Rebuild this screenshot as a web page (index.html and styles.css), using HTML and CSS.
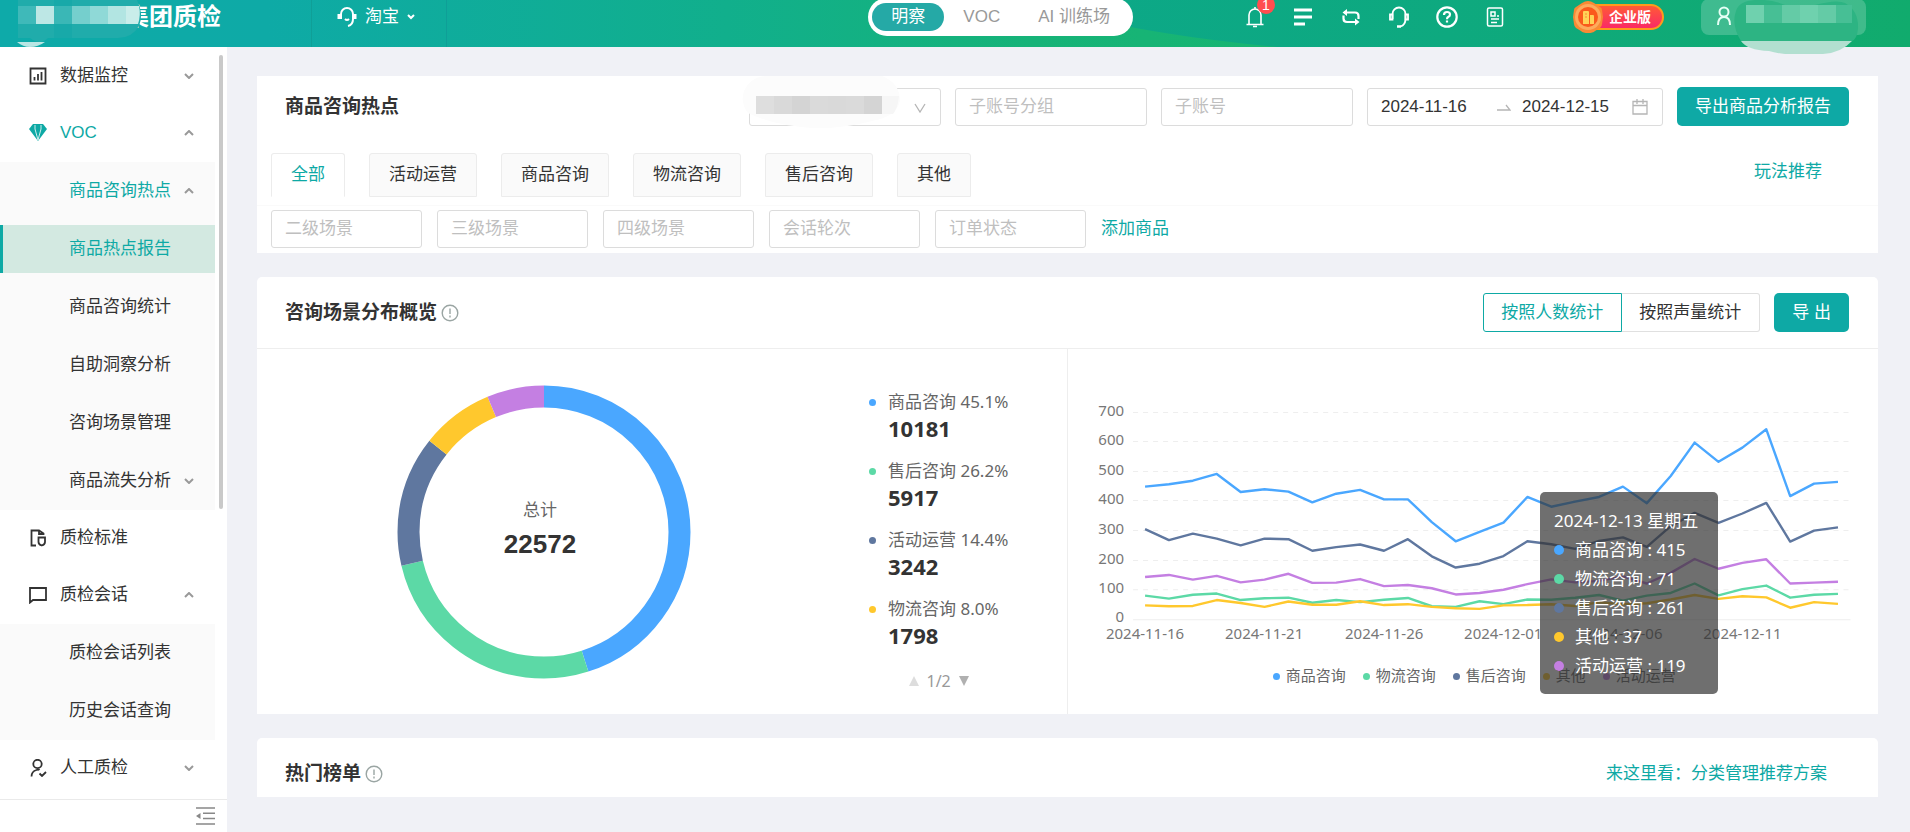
FILE: index.html
```html
<!DOCTYPE html>
<html lang="zh-CN">
<head>
<meta charset="utf-8">
<title>商品咨询热点</title>
<meta name="viewport" content="width=device-width, initial-scale=1">
<link rel="stylesheet" href="styles.css">
</head>
<body>
<div class="app">
  <header class="topbar">
    <svg class="topbar-wave" viewBox="0 0 850 47" preserveAspectRatio="none" aria-hidden="true">
      <defs>
        <linearGradient id="wave" x1="0" x2="1" y1="0" y2="0">
          <stop offset="0" stop-color="#0ca888"/>
          <stop offset="0.45" stop-color="#0ea97f"/>
          <stop offset="1" stop-color="#11ab6d"/>
        </linearGradient>
      </defs>
      <path d="M0 14Q90 36 210 47H850V0H0Z" fill="url(#wave)"/>
    </svg>

    <div class="brand">
      <span class="brand-name">集团质检</span>
      <svg class="brand-mask" viewBox="0 0 146 47" aria-hidden="true">
        <path d="M18 0H137Q144 14 139 26Q132 38 118 38H48Q40 46 30 38H18Z" fill="#20acab"/>
        <path d="M54 0H72V38H54Z" fill="#18a9a9"/>
        <path d="M18 6H36V24H18Z" fill="#3fb9b9"/>
        <path d="M36 6H54V24H36Z" fill="#bde7e5"/>
        <path d="M54 6H72V24H54Z" fill="#3ab7b6"/>
        <path d="M72 6H90V24H72Z" fill="#75cfcd"/>
        <path d="M90 6H108V24H90Z" fill="#8fd9d7"/>
        <path d="M108 6H126V24H108Z" fill="#b2e5e2"/>
        <path d="M126 6H139Q141 15 138 24H126Z" fill="#c9edea"/>
        <path d="M17 42H45Q38 47 30 47Q23 47 17 42Z" fill="#b9e6e4"/>
      </svg>
    </div>

    <button class="channel" type="button">
      <svg width="20" height="22" viewBox="0 0 20 22" fill="none" stroke="#fff" stroke-width="2" aria-hidden="true">
        <path d="M4 13V8a6 6 0 0 1 12 0v5q0 6-5 7"/><path d="M2 8v5M18 8v5" stroke-width="3"/><path d="M8 13q2 2 4 0"/>
      </svg>
      <span>淘宝</span>
      <svg width="8" height="6" viewBox="0 0 8 6" fill="none" stroke="#fff" stroke-width="2" aria-hidden="true"><path d="M1 1l3 3 3-3"/></svg>
    </button>

    <nav class="mode">
      <a class="mode-item mode-on" href="#">明察</a>
      <a class="mode-item" href="#">VOC</a>
      <a class="mode-item" href="#">AI 训练场</a>
    </nav>

    <div class="tools">
      <button class="tool" type="button" aria-label="通知">
        <svg width="22" height="22" viewBox="0 0 22 22" fill="none" stroke="#fff" stroke-width="1.6"><path d="M5 18V9a6 6 0 0 1 12 0v9M2.500 18.500h17M9 20.500h4M11 3V1"/></svg>
        <span class="badge">1</span>
      </button>
      <button class="tool" type="button" aria-label="列表">
        <svg width="22" height="22" viewBox="0 0 22 22" fill="none" stroke="#fff" stroke-width="3.200"><path d="M2 4h18M2 11h18M2 18h11"/></svg>
      </button>
      <button class="tool" type="button" aria-label="切换">
        <svg width="22" height="22" viewBox="0 0 22 22" fill="none" stroke="#fff" stroke-width="2.200"><path d="M4 6.500h11q3.500 0 3.500 3.500v3M18 16H7q-3.500 0-3.500-3.500v-3"/><path d="M7 3L2.500 6.500 7 10ZM15 12.500l4.500 3.500-4.500 3.500Z" fill="#fff" stroke="none"/></svg>
      </button>
      <button class="tool" type="button" aria-label="客服">
        <svg width="22" height="22" viewBox="0 0 22 22" fill="none" stroke="#fff" stroke-width="1.800"><path d="M4.500 13V8a6.500 6.500 0 0 1 13 0v5q0 6-5 7.500"/><path d="M2 8.500h2.500v5H2zM17.500 8.500H20v5h-2.500z"/><path d="M9 20.500h4" stroke-width="2.500"/></svg>
      </button>
      <button class="tool" type="button" aria-label="帮助">
        <svg width="22" height="22" viewBox="0 0 22 22" fill="none" stroke="#fff" stroke-width="2.200"><circle cx="11" cy="11" r="9.700"/><path d="M8 9q0-3 3-3t3 2.500q0 1.500-1.500 2.200T11 13.200"/><path d="M11 14.500v2"/></svg>
      </button>
      <button class="tool" type="button" aria-label="文档">
        <svg width="22" height="22" viewBox="0 0 22 22" fill="none" stroke="#fff" stroke-width="1.500"><rect x="3.500" y="2" width="15" height="18" rx="1.500"/><path d="M7 6h4v4H7zM13 10h2M7 13h8M7 16.500h6"/></svg>
      </button>
    </div>

    <div class="edition">
      <svg class="edition-mark" width="32" height="34" viewBox="0 0 32 34" aria-hidden="true">
        <path d="M16 1q3 0 6 2l6 4q2 1 2 3l1 7-1 7q0 2-2 4l-5 3q-2 2-7 2t-7-2l-5-3q-2-2-2-4l-1-7 1-7q0-2 2-3l6-4q3-2 6-2z" fill="#f98a35"/>
        <circle cx="16" cy="17" r="13" fill="#fdab5c"/><circle cx="16" cy="17" r="10" fill="#fa5a1c"/>
        <path d="M11 12q0-1 1-1h4q1 0 1 1v12h-6zM18 15h3q1 0 1 1v8h-4z" fill="#ffd257"/>
        <path d="M13 14h2M13 17h2" stroke="#f98a35"/>
      </svg>
      <span class="edition-text">企业版</span>
    </div>

    <div class="user">
      <svg width="18" height="20" viewBox="0 0 18 20" fill="none" stroke="#e6fff5" stroke-width="2" aria-hidden="true"><circle cx="9" cy="6" r="4.500"/><path d="M3 19q0-8 6-8t6 8"/></svg>
      <svg class="user-mask" viewBox="0 0 126 56" aria-hidden="true">
        <path d="M3 12Q6 2 22 1Q38 0 52 6H82Q104 0 112 4Q126 12 125 30Q124 40 119 42H8Q-2 26 3 12Z" fill="#2db483"/>
        <path d="M8 42H119Q108 54 90 55H52Q42 54 36 52Q14 51 8 42Z" fill="#b2dfd0"/>
        <path d="M13 6h18v18H13zM67 6h18v18H67z" fill="#6fd1ae"/>
        <path d="M31 6h18v18H31zM103 6h16v18h-16z" fill="#47bf95"/>
        <path d="M49 6h18v18H49zM85 6h18v18H85z" fill="#64cba6"/>
      </svg>
    </div>
  </header>

  <aside class="sidebar">
    <nav class="menu">
      <a class="item" href="#">
        <svg class="ico" viewBox="0 0 18 18" fill="none" stroke="#333" stroke-width="1.800"><path d="M1.500 1.500h15v15h-15zM5.500 10v3.500M9 7v6.500M12.500 5v8.500"/></svg>
        <span class="label">数据监控</span><svg class="arrow" viewBox="0 0 10 6"><path d="M1 1l4 4 4-4"/></svg>
      </a>
      <a class="item item-active" href="#">
        <svg class="ico" viewBox="0 0 18 18" fill="#0ea9a5"><path d="M4 0h10l4 5-9 12L0 5z"/><path d="M6 5l3 11 3-11M6 1v4M12 1v4" fill="none" stroke="#fff" stroke-width="0.800"/></svg>
        <span class="label">VOC</span><svg class="arrow" viewBox="0 0 10 6"><path d="M1 5l4-4 4 4"/></svg>
      </a>
      <div class="submenu">
        <a class="item item-active" href="#"><span class="label">商品咨询热点</span><svg class="arrow" viewBox="0 0 10 6"><path d="M1 5l4-4 4 4"/></svg></a>
        <a class="item item-active item-current" href="#"><span class="label">商品热点报告</span></a>
        <a class="item" href="#"><span class="label">商品咨询统计</span></a>
        <a class="item" href="#"><span class="label">自助洞察分析</span></a>
        <a class="item" href="#"><span class="label">咨询场景管理</span></a>
        <a class="item" href="#"><span class="label">商品流失分析</span><svg class="arrow" viewBox="0 0 10 6"><path d="M1 1l4 4 4-4"/></svg></a>
      </div>
      <a class="item" href="#">
        <svg class="ico" viewBox="0 0 18 18" fill="none" stroke="#333" stroke-width="1.800"><path d="M7 16.500H2.500v-15H10l4.500 3V6M10 1.500V5h4.500"/><path d="M9.500 8.500h6.500v4.500q0 2.500-3.200 3.500-3.300-1-3.300-3.500z"/></svg>
        <span class="label">质检标准</span>
      </a>
      <a class="item" href="#">
        <svg class="ico" viewBox="0 0 18 18" fill="none" stroke="#333" stroke-width="1.800"><path d="M1 2h16v12H4l-3 2.500z"/></svg>
        <span class="label">质检会话</span><svg class="arrow" viewBox="0 0 10 6"><path d="M1 5l4-4 4 4"/></svg>
      </a>
      <div class="submenu">
        <a class="item" href="#"><span class="label">质检会话列表</span></a>
        <a class="item" href="#"><span class="label">历史会话查询</span></a>
      </div>
      <a class="item" href="#">
        <svg class="ico" viewBox="0 0 18 18" fill="none" stroke="#333" stroke-width="1.800"><circle cx="8.500" cy="5" r="4.200"/><path d="M2.500 17.500q0-5 5-6.500 2-1 3 0M10.500 14.500l2.500 2.500 4-4"/></svg>
        <span class="label">人工质检</span><svg class="arrow" viewBox="0 0 10 6"><path d="M1 1l4 4 4-4"/></svg>
      </a>
    </nav>
    <div class="scrollbar"></div>
    <div class="side-foot">
      <button class="fold" type="button" aria-label="收起菜单">
        <svg width="19" height="18" viewBox="0 0 19 18" fill="none" stroke="#888" stroke-width="1.500"><path d="M0 1h19M7 6.300h12M7 11.600h12M0 17h19"/><path d="M4.500 6v6L0 9z" fill="#888" stroke="none"/></svg>
      </button>
    </div>
  </aside>

  <main class="main">
    <section class="card">
      <div class="row filter-head">
        <h2 class="title">商品咨询热点</h2>
        <div class="shop">
          <select class="field shop-select" aria-label="店铺"><option></option></select>
          <svg class="shop-arrow" width="12" height="10" viewBox="0 0 12 10" fill="none" stroke="#b5b5b5" stroke-width="1.300" aria-hidden="true"><path d="M1 1l5 8 5-8"/></svg>
          <svg class="shop-mask" viewBox="0 0 160 56" aria-hidden="true">
            <path d="M2 16Q8 2 24 1H140Q158 8 158 26Q154 42 130 46Q100 54 70 53Q30 50 6 38Q-2 28 2 16Z" fill="#fcfcfc"/>
            <path d="M14 21h18v18H14z" fill="#dedede"/><path d="M32 21h18v18H32zM86 21h18v18H86z" fill="#d9d9d9"/>
            <path d="M50 21h18v18H50zM122 21h18v18h-18z" fill="#d4d4d4"/><path d="M68 21h18v18H68zM104 21h18v18h-18z" fill="#dadada"/>
            <path d="M140 21h17q-1 12-6 18h-11z" fill="#f6f6f6"/>
          </svg>
        </div>
        <input class="field field-l" type="text" placeholder="子账号分组" aria-label="子账号分组">
        <input class="field field-l" type="text" placeholder="子账号" aria-label="子账号">
        <div class="field range">
          <input class="date" type="text" value="2024-11-16" aria-label="开始日期">
          <svg class="range-sep" width="14" height="8" viewBox="0 0 14 8" fill="none" stroke="#b5b5b5" stroke-width="1.300" aria-hidden="true"><path d="M0 7h13L9 2"/></svg>
          <input class="date" type="text" value="2024-12-15" aria-label="结束日期">
          <svg class="range-cal" width="16" height="16" viewBox="0 0 16 16" fill="none" stroke="#b5b5b5" stroke-width="1.300" aria-hidden="true"><path d="M1 2.500h14v12.500H1zM1 6.500h14M5 0v5M11 0v5"/></svg>
        </div>
        <button class="primary" type="button">导出商品分析报告</button>
      </div>
      <div class="row tabs-row">
        <div class="tabs" role="tablist">
          <button class="tab tab-on" type="button" role="tab">全部</button>
          <button class="tab" type="button" role="tab">活动运营</button>
          <button class="tab" type="button" role="tab">商品咨询</button>
          <button class="tab" type="button" role="tab">物流咨询</button>
          <button class="tab" type="button" role="tab">售后咨询</button>
          <button class="tab" type="button" role="tab">其他</button>
        </div>
        <a class="link" href="#">玩法推荐</a>
      </div>
      <div class="row scene-row">
        <input class="field field-s" type="text" placeholder="二级场景" aria-label="二级场景">
        <input class="field field-s" type="text" placeholder="三级场景" aria-label="三级场景">
        <input class="field field-s" type="text" placeholder="四级场景" aria-label="四级场景">
        <input class="field field-s" type="text" placeholder="会话轮次" aria-label="会话轮次">
        <input class="field field-s" type="text" placeholder="订单状态" aria-label="订单状态">
        <a class="link" href="#">添加商品</a>
      </div>
    </section>

    <section class="card card-round">
      <div class="row panel-head">
        <h2 class="title">咨询场景分布概览</h2>
        <svg class="info" viewBox="0 0 18 18" fill="none" stroke="#9aa5a3" stroke-width="1.400" aria-hidden="true"><circle cx="9" cy="9" r="7.800"/><path d="M9 4.500v5.500M9 11.500v2"/></svg>
        <div class="segment">
          <button class="seg seg-on" type="button">按照人数统计</button>
          <button class="seg" type="button">按照声量统计</button>
        </div>
        <button class="primary" type="button">导 出</button>
      </div>
      <div class="charts">
        <div class="pie">
          <svg class="donut" viewBox="0 0 294 294" role="img" aria-label="咨询场景分布">
            <g fill="none" stroke-width="22" transform="rotate(-90 147 147)">
              <circle cx="147" cy="147" r="135.500" pathLength="1000" stroke="#4aa7ff" stroke-dasharray="451 549"/>
              <circle cx="147" cy="147" r="135.500" pathLength="1000" stroke="#5cd9a6" stroke-dasharray="262 738" stroke-dashoffset="-451"/>
              <circle cx="147" cy="147" r="135.500" pathLength="1000" stroke="#5f779f" stroke-dasharray="144 856" stroke-dashoffset="-713"/>
              <circle cx="147" cy="147" r="135.500" pathLength="1000" stroke="#ffc82d" stroke-dasharray="80 920" stroke-dashoffset="-857"/>
              <circle cx="147" cy="147" r="135.500" pathLength="1000" stroke="#c47fe2" stroke-dasharray="63 937" stroke-dashoffset="-937"/>
            </g>
            <text class="donut-label" x="143" y="131">总计</text>
            <text class="donut-total" x="143" y="168">22572</text>
          </svg>
          <div class="legend">
            <ul class="legend-list">
              <li class="legend-item"><i class="dot blue"></i><span>商品咨询 45.1%</span><b class="num">10181</b></li>
              <li class="legend-item"><i class="dot green"></i><span>售后咨询 26.2%</span><b class="num">5917</b></li>
              <li class="legend-item"><i class="dot navy"></i><span>活动运营 14.4%</span><b class="num">3242</b></li>
              <li class="legend-item"><i class="dot yellow"></i><span>物流咨询 8.0%</span><b class="num">1798</b></li>
            </ul>
            <div class="pager">
              <svg width="10" height="10" viewBox="0 0 10 10" aria-hidden="true"><path d="M5 0l5 10H0z" fill="#ddd"/></svg>
              <span>1/2</span>
              <svg width="10" height="10" viewBox="0 0 10 10" aria-hidden="true"><path d="M0 0h10L5 10z" fill="#b0b0b0"/></svg>
            </div>
          </div>
        </div>
        <div class="trend">
          <svg class="plot" viewBox="0 0 810 300" role="img" aria-label="每日咨询趋势">
            <g class="grid">
              <path d="M65 63.500H782M65 92.500H782M65 122.500H782M65 151.500H782M65 181.500H782M65 211.500H782M65 240.500H782" stroke-dasharray="5 5"/>
              <path d="M65 270.500H782"/>
            </g>
            <g class="ticks-y">
              <text x="56" y="67">700</text><text x="56" y="96">600</text><text x="56" y="126">500</text><text x="56" y="155">400</text>
              <text x="56" y="185">300</text><text x="56" y="215">200</text><text x="56" y="244">100</text><text x="56" y="273">0</text>
            </g>
            <g class="ticks-x">
              <text x="77" y="290">2024-11-16</text><text x="196" y="290">2024-11-21</text><text x="316" y="290">2024-11-26</text>
              <text x="435" y="290">2024-12-01</text><text x="555" y="290">2024-12-06</text><text x="674" y="290">2024-12-11</text>
            </g>
            <g class="lines" stroke-width="2.400" transform="translate(77 269.500) scale(23.880 -0.2952)">
              <polyline stroke="#4aa7ff" points="0,447 1,455 2,467 3,490 4,429 5,438 6,430 7,394 8,423 9,436 10,404 11,404 12,327 13,262 14,294 15,325 16,412 17,379 18,396 19,412 20,447 21,391 22,483 23,596 24,531 25,579 26,641 27,415 28,457 29,463"/>
              <polyline stroke="#5f779f" points="0,303 1,266 2,288 3,271 4,248 5,271 6,269 7,230 8,242 9,251 10,230 11,269 12,211 13,173 14,186 15,212 16,262 17,252 18,236 19,263 20,275 21,243 22,313 23,358 24,324 25,356 26,392 27,261 28,298 29,309"/>
              <polyline stroke="#c47fe2" points="0,141 1,148 2,132 3,145 4,123 5,132 6,152 7,121 8,122 9,134 10,110 11,114 12,103 13,82 14,87 15,98 16,117 17,133 18,123 19,128 20,143 21,119 22,155 23,202 24,169 25,189 26,201 27,119 28,122 29,125"/>
              <polyline stroke="#5cd9a6" points="0,78 1,68 2,81 3,85 4,63 5,69 6,71 7,54 8,63 9,56 10,64 11,70 12,42 13,40 14,59 15,49 16,65 17,64 18,71 19,80 20,61 21,78 22,87 23,119 24,79 25,100 26,112 27,71 28,81 29,84"/>
              <polyline stroke="#ffc82d" points="0,45 1,42 2,43 3,63 4,53 5,40 6,58 7,47 8,47 9,59 10,46 11,49 12,40 13,35 14,33 15,45 16,46 17,49 18,43 19,55 20,49 21,52 22,65 23,80 24,67 25,76 26,72 27,37 28,56 29,50"/>
            </g>
          </svg>
          <ul class="series">
            <li class="series-item"><i class="dot blue"></i>商品咨询</li>
            <li class="series-item"><i class="dot green"></i>物流咨询</li>
            <li class="series-item"><i class="dot navy"></i>售后咨询</li>
            <li class="series-item"><i class="dot yellow"></i>其他</li>
            <li class="series-item"><i class="dot purple"></i>活动运营</li>
          </ul>
          <div class="tooltip">
            <div>2024-12-13 星期五</div>
            <div class="tip-row"><i class="dot blue"></i>商品咨询 : 415</div>
            <div class="tip-row"><i class="dot green"></i>物流咨询 : 71</div>
            <div class="tip-row"><i class="dot navy"></i>售后咨询 : 261</div>
            <div class="tip-row"><i class="dot yellow"></i>其他 : 37</div>
            <div class="tip-row"><i class="dot purple"></i>活动运营 : 119</div>
          </div>
        </div>
      </div>
    </section>

    <section class="card card-round">
      <div class="row rank-head">
        <h2 class="title">热门榜单</h2>
        <svg class="info" viewBox="0 0 18 18" fill="none" stroke="#9aa5a3" stroke-width="1.400" aria-hidden="true"><circle cx="9" cy="9" r="7.800"/><path d="M9 4.500v5.500M9 11.500v2"/></svg>
        <a class="link" href="#">来这里看：分类管理推荐方案</a>
      </div>
    </section>
  </main>
</div>
</body>
</html>
```

FILE: styles.css
```css
*,
*::before,
*::after {
  box-sizing: border-box;
}

body {
  margin: 0;
  background: #f0f1f6;
  color: #333;
  font: 17px/24px "Liberation Sans", "Noto Sans CJK SC", sans-serif;
}

button,
input,
select {
  font: inherit;
  color: inherit;
}

button {
  padding: 0;
  border: 0;
  background: none;
  white-space: nowrap;
}

a {
  color: inherit;
  text-decoration: none;
}

ul {
  margin: 0;
  padding: 0;
  list-style: none;
}

svg {
  display: block;
  flex: none;
}

.app {
  display: grid;
  grid-template-columns: 227px minmax(0, 1fr);
  grid-template-rows: 47px minmax(0, 1fr);
  height: 100vh;
  overflow: hidden;
}

/* Top bar */
.topbar {
  grid-column: 1 / -1;
  position: relative;
  z-index: 2;
  display: flex;
  align-items: center;
  padding: 0 44px 13px 0;
  background: linear-gradient(90deg, #0eaaa9 0, #0eaaa6 14%, #11af8c 38%, #16b378 54%, #18b572 66%);
  color: #fff;
}

.topbar-wave {
  position: absolute;
  top: 0;
  right: 0;
  width: 44%;
  height: 100%;
}

.brand {
  position: relative;
  width: 311px;
  padding-left: 125px;
}

.brand-name {
  font-size: 24px;
  line-height: 30px;
  font-weight: 700;
}

.brand-mask {
  position: absolute;
  left: 0;
  top: -2px;
  width: 146px;
  height: 47px;
}

.channel {
  display: flex;
  align-items: center;
  align-self: flex-start;
  justify-content: center;
  gap: 8px;
  width: 136px;
  height: 47px;
  padding: 0 6px 13px 0;
  border: solid #0f9f97;
  border-width: 0 1px;
}

.mode {
  position: relative;
  display: flex;
  align-items: center;
  height: 38px;
  margin-left: auto;
  padding: 0 4px;
  border-radius: 19px;
  background: #fff;
  color: #999;
}

.mode-item {
  padding: 2px 19px;
  border-radius: 14px;
}

.mode-on {
  background: #25a9a6;
  color: #fff;
}

.tools {
  position: relative;
  display: flex;
  gap: 26px;
  margin-left: 111px;
}

.tool {
  position: relative;
}

.badge {
  position: absolute;
  left: 13px;
  top: -10px;
  width: 18px;
  height: 18px;
  border-radius: 9px;
  background: #ff4d4f;
  font-size: 14px;
  line-height: 18px;
}

.edition {
  position: relative;
  display: flex;
  align-items: center;
  margin-left: 66px;
}

.edition-mark {
  position: relative;
  z-index: 1;
}

.edition-text {
  height: 26px;
  margin-left: -22px;
  padding: 0 11px 0 25px;
  border: 2px solid #ff9a1c;
  border-radius: 13px;
  background: linear-gradient(#ff5a36, #fa2a66);
  font-size: 14px;
  line-height: 22px;
  font-weight: 700;
}

.user {
  position: relative;
  width: 165px;
  height: 36px;
  margin-left: 37px;
  padding: 7px 14px;
  border-radius: 8px;
  background: rgba(255, 255, 255, 0.2);
}

.user-mask {
  position: absolute;
  left: 32px;
  top: 0;
  width: 126px;
  height: 56px;
}

/* Sidebar */
.sidebar {
  position: relative;
  display: flex;
  flex-direction: column;
  background: #fff;
}

.menu {
  flex: 1;
  min-height: 0;
  margin-right: 12px;
  padding-top: 1px;
  overflow: hidden;
}

.item {
  display: flex;
  align-items: center;
  gap: 13px;
  height: 48px;
  margin: 4px 0 5px;
  padding: 0 21px 0 29px;
}

.item + .item {
  margin-top: 9px;
}

.ico {
  width: 18px;
  height: 18px;
}

.label {
  flex: 1;
}

.arrow {
  width: 10px;
  height: 6px;
  fill: none;
  stroke: #999;
  stroke-width: 2;
}

.submenu {
  display: flow-root;
  background: #fafafa;
}

.submenu .item {
  margin: 5px 0;
  padding-left: 69px;
}

.submenu .item + .item {
  margin-top: 10px;
}

.item-active {
  color: #0ea9a5;
}

.submenu .item-current {
  padding-left: 66px;
  border-left: 3px solid #0ea9a5;
  background: #d3e9e1;
}

.scrollbar {
  position: absolute;
  top: 8px;
  right: 4px;
  width: 4px;
  height: 454px;
  border-radius: 2px;
  background: #c9c9c9;
}

.side-foot {
  display: flex;
  align-items: center;
  justify-content: flex-end;
  height: 33px;
  padding-right: 12px;
  border-top: 1px solid #eaeaea;
}

/* Content */
.main {
  display: flex;
  flex-direction: column;
  gap: 24px;
  padding: 29px 32px 35px 30px;
}

.card {
  background: #fff;
}

.card-round {
  border-radius: 5px 5px 0 0;
}

.row {
  display: flex;
  align-items: center;
}

.title {
  margin: 0;
  font-size: 19px;
  line-height: 28px;
  font-weight: 700;
}

.link {
  color: #0ea9a5;
}

.field {
  height: 38px;
  padding: 0 13px;
  border: 1px solid #dcdcdc;
  border-radius: 3px;
  background: #fff;
}

.field::placeholder {
  color: #bfbfbf;
}

.field-l {
  width: 192px;
}

.field-s {
  width: 151px;
}

.primary {
  height: 39px;
  padding: 0 18px;
  border-radius: 5px;
  background: #0ea9a5;
  color: #fff;
}

.filter-head {
  gap: 14px;
  padding: 11px 29px 0 28px;
}

.shop {
  position: relative;
  width: 192px;
  margin-left: auto;
}

.shop-select {
  display: block;
  width: 100%;
  appearance: none;
}

.shop-arrow {
  position: absolute;
  right: 15px;
  top: 15px;
}

.shop-mask {
  position: absolute;
  left: -7px;
  top: -13px;
  width: 160px;
  height: 56px;
}

.range {
  display: flex;
  align-items: center;
  width: 296px;
}

.date {
  width: 118px;
  padding: 0;
  border: 0;
  outline: 0;
}

.range-sep {
  margin: 0 11px 0 -2px;
}

.date + .range-cal {
  margin-left: -8px;
}

.tabs-row {
  justify-content: space-between;
  padding: 27px 56px 8px 14px;
  border-bottom: 1px solid #fafafa;
}

.tabs-row .link {
  padding-bottom: 6px;
}

.tabs {
  display: flex;
  gap: 24px;
}

.tab {
  height: 44px;
  padding: 0 19px;
  border: 1px solid #ececec;
  border-radius: 3px 3px 0 0;
  background: #fafafa;
}

.tab-on {
  border-bottom-color: #fff;
  background: #fff;
  color: #0ea9a5;
}

.scene-row {
  gap: 15px;
  padding: 4px 14px 5px;
}

.panel-head {
  height: 72px;
  padding: 0 29px 0 28px;
  border-bottom: 1px solid #eee;
}

.info {
  width: 18px;
  height: 18px;
  margin-left: 4px;
}

.segment {
  display: flex;
  margin: 0 14px 0 auto;
}

.seg {
  height: 39px;
  padding: 0 18px 0 17px;
  border: 1px solid #e0e0e0;
  border-left: 0;
  border-radius: 0 3px 3px 0;
}

.seg-on {
  border: 1px solid #0ea9a5;
  border-radius: 3px 0 0 3px;
  color: #0ea9a5;
}

/* Charts */
.charts {
  display: grid;
  grid-template-columns: minmax(0, 1fr) minmax(0, 1fr);
  min-height: 365px;
  color: #666;
}

.pie {
  display: flex;
  gap: 178px;
  padding: 36px 0 0 140px;
  border-right: 1px solid #eee;
}

.donut {
  width: 294px;
  height: 294px;
}

.donut-label,
.donut-total,
.ticks-x {
  text-anchor: middle;
}

.donut-label {
  fill: #666;
  font-size: 17px;
}

.donut-total {
  fill: #333;
  font-size: 26px;
  font-weight: 700;
}

.legend,
.tooltip,
.plot {
  font-family: "Noto Sans", "Noto Sans CJK SC", sans-serif;
}

.legend {
  padding-top: 5px;
}

.legend-list {
  display: grid;
  gap: 16px;
}

.legend-item {
  display: grid;
  grid-template-columns: 7px auto;
  align-items: center;
  column-gap: 12px;
}

.num {
  grid-column: 2;
  color: #333;
  font-size: 22px;
  line-height: 29px;
}

.dot {
  flex: none;
  width: 7px;
  height: 7px;
  border-radius: 50%;
}

.blue {
  background: #4aa7ff;
}

.green {
  background: #5cd9a6;
}

.navy {
  background: #5f779f;
}

.yellow {
  background: #ffc82d;
}

.purple {
  background: #c47fe2;
}

.pager {
  display: flex;
  align-items: center;
  justify-content: center;
  gap: 8px;
  margin-top: 19px;
  color: #999;
  font-size: 16px;
}

.trend {
  position: relative;
}

.plot {
  width: 100%;
  height: auto;
  font-size: 15px;
}

.grid {
  stroke: #eee;
}

.ticks-y,
.ticks-x {
  fill: #777;
}

.ticks-y {
  text-anchor: end;
}

.lines {
  fill: none;
  stroke-linejoin: round;
}

.lines polyline {
  vector-effect: non-scaling-stroke;
}

.series {
  display: flex;
  justify-content: center;
  gap: 17px;
  margin-top: 15px;
  padding-left: 3px;
  font-size: 15px;
}

.series-item {
  display: flex;
  align-items: center;
  gap: 6px;
}

.tooltip {
  position: absolute;
  top: 143px;
  left: 58.3%;
  padding: 14px 20px 14px 14px;
  border-radius: 5px;
  background: rgba(50, 50, 50, 0.7);
  color: #fff;
  line-height: 29px;
  white-space: nowrap;
}

.tip-row {
  display: flex;
  align-items: center;
  gap: 11px;
}

.tip-row .dot {
  width: 10px;
  height: 10px;
}

.rank-head {
  padding: 22px 51px 9px 28px;
}

.rank-head .link {
  margin-left: auto;
}
```
